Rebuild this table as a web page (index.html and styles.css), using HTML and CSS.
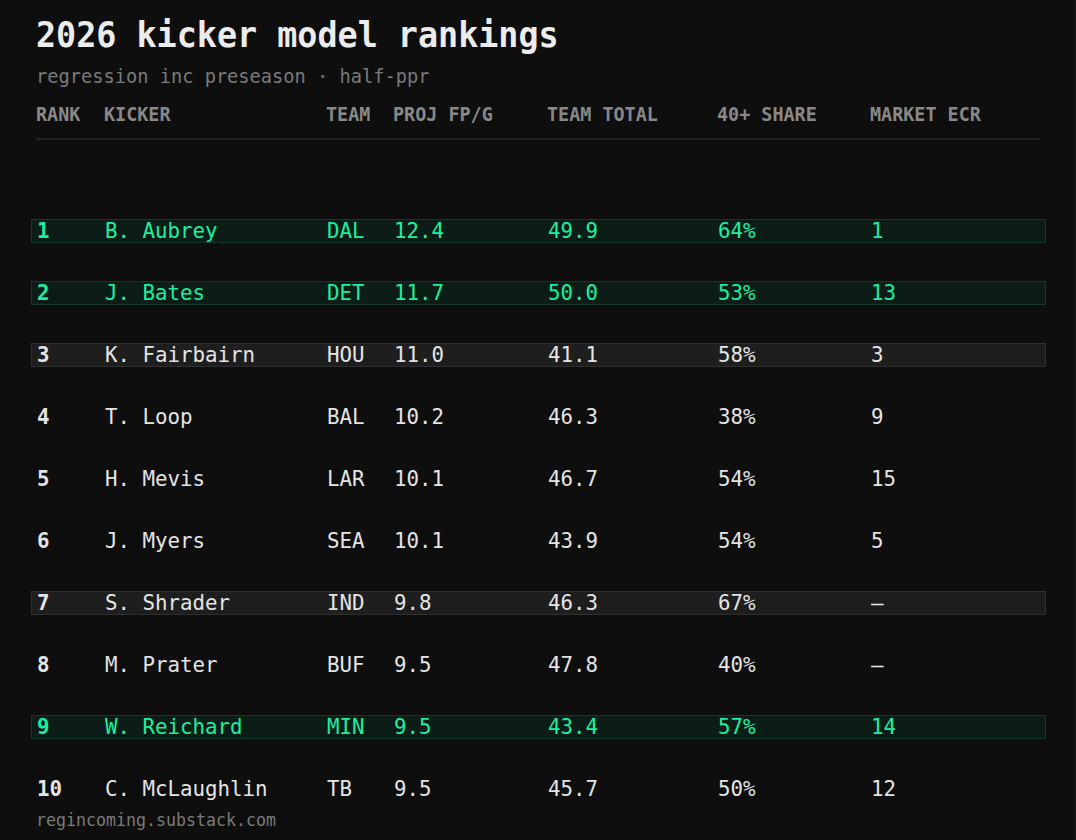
FILE: index.html
```html
<!DOCTYPE html>
<html>
<head>
<meta charset="utf-8">
<link rel="stylesheet" href="styles.css">
</head>
<body>
<main class="page">
  <h1 class="title"><span class="sx">2026 kicker model rankings</span></h1>
  <p class="subtitle"><span class="sx">regression inc preseason · half-ppr</span></p>
  <div class="head cols">
    <span class="sx">RANK</span><span class="sx">KICKER</span><span class="sx">TEAM</span><span class="sx">PROJ FP/G</span><span class="sx">TEAM TOTAL</span><span class="sx">40+ SHARE</span><span class="sx">MARKET ECR</span>
  </div>
  <div class="rows">
    <div class="row cols hl-green"><span class="sx rank">1</span><span class="sx">B. Aubrey</span><span class="sx">DAL</span><span class="sx">12.4</span><span class="sx">49.9</span><span class="sx">64%</span><span class="sx">1</span></div>
    <div class="row cols hl-green"><span class="sx rank">2</span><span class="sx">J. Bates</span><span class="sx">DET</span><span class="sx">11.7</span><span class="sx">50.0</span><span class="sx">53%</span><span class="sx">13</span></div>
    <div class="row cols hl-gray"><span class="sx rank">3</span><span class="sx">K. Fairbairn</span><span class="sx">HOU</span><span class="sx">11.0</span><span class="sx">41.1</span><span class="sx">58%</span><span class="sx">3</span></div>
    <div class="row cols"><span class="sx rank">4</span><span class="sx">T. Loop</span><span class="sx">BAL</span><span class="sx">10.2</span><span class="sx">46.3</span><span class="sx">38%</span><span class="sx">9</span></div>
    <div class="row cols"><span class="sx rank">5</span><span class="sx">H. Mevis</span><span class="sx">LAR</span><span class="sx">10.1</span><span class="sx">46.7</span><span class="sx">54%</span><span class="sx">15</span></div>
    <div class="row cols"><span class="sx rank">6</span><span class="sx">J. Myers</span><span class="sx">SEA</span><span class="sx">10.1</span><span class="sx">43.9</span><span class="sx">54%</span><span class="sx">5</span></div>
    <div class="row cols hl-gray"><span class="sx rank">7</span><span class="sx">S. Shrader</span><span class="sx">IND</span><span class="sx">9.8</span><span class="sx">46.3</span><span class="sx">67%</span><span class="sx">—</span></div>
    <div class="row cols"><span class="sx rank">8</span><span class="sx">M. Prater</span><span class="sx">BUF</span><span class="sx">9.5</span><span class="sx">47.8</span><span class="sx">40%</span><span class="sx">—</span></div>
    <div class="row cols hl-green"><span class="sx rank">9</span><span class="sx">W. Reichard</span><span class="sx">MIN</span><span class="sx">9.5</span><span class="sx">43.4</span><span class="sx">57%</span><span class="sx">14</span></div>
    <div class="row cols"><span class="sx rank">10</span><span class="sx">C. McLaughlin</span><span class="sx">TB</span><span class="sx">9.5</span><span class="sx">45.7</span><span class="sx">50%</span><span class="sx">12</span></div>
  </div>
  <footer class="footer"><span class="sx">regincoming.substack.com</span></footer>
</main>
</body>
</html>
```

FILE: styles.css
```css
* { box-sizing: border-box; }
html, body {
  margin: 0;
  padding: 0;
  background: #0e0e0e;
  height: 100%;
}
body {
  font-family: "DejaVu Sans Mono", "Liberation Mono", monospace;
  color: #e6e6e6;
  overflow: hidden;
  box-shadow: inset -2px 0 0 #151515;
}
.sx {
  display: inline-block;
  white-space: pre;
  transform: scaleX(0.944);
  transform-origin: left center;
}
.page {
  padding: 14px 0 0 36px;
  width: 1046px;
}
.title {
  margin: 0;
  font-size: 35px;
  line-height: 42px;
  font-weight: bold;
  color: #ececec;
}
.title .sx { transform: scaleX(0.954); }
.subtitle {
  margin: 10px 0 0;
  font-size: 19.8px;
  line-height: 22px;
  color: #7a7a7a;
}
.cols {
  display: grid;
  grid-template-columns: 68px 222px 67px 154px 170px 153px 1fr;
  align-items: center;
}
.head {
  margin-top: 16px;
  font-size: 19.5px;
  line-height: 22px;
  font-weight: bold;
  color: #888888;
  padding-bottom: 12px;
  border-bottom: 2px solid #222222;
  width: 1004px;
}
.rows {
  margin-top: 79px;
  margin-left: -5px;
  display: flex;
  flex-direction: column;
  gap: 38px;
}
.row {
  height: 24px;
  padding-left: 5px;
  font-size: 22px;
  line-height: 22px;
  border: 1px solid transparent;
  color: #e4e4e4;
}
.rank { font-weight: bold; }
.hl-green {
  background: #0c1d18;
  border-color: #12382b;
  color: #1bef9f;
}
.hl-gray {
  background: #1e1e1e;
  border-color: #2e2e2e;
}
.footer {
  margin-top: 9px;
  font-size: 17.6px;
  line-height: 20px;
  color: #7a7a7a;
}
```
